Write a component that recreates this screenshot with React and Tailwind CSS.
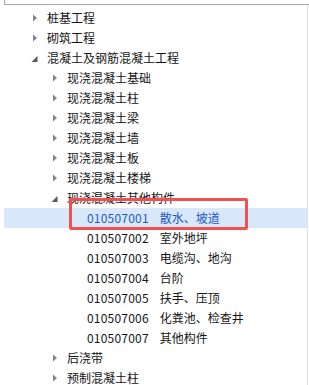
import React from 'react'

const rows = [
  { level: 0, state: 'closed', label: '桩基工程' },
  { level: 0, state: 'closed', label: '砌筑工程' },
  { level: 0, state: 'open', label: '混凝土及钢筋混凝土工程' },
  { level: 1, state: 'closed', label: '现浇混凝土基础' },
  { level: 1, state: 'closed', label: '现浇混凝土柱' },
  { level: 1, state: 'closed', label: '现浇混凝土梁' },
  { level: 1, state: 'closed', label: '现浇混凝土墙' },
  { level: 1, state: 'closed', label: '现浇混凝土板' },
  { level: 1, state: 'closed', label: '现浇混凝土楼梯' },
  { level: 1, state: 'open', label: '现浇混凝土其他构件' },
  { level: 2, code: '010507001', label: '散水、坡道', selected: true },
  { level: 2, code: '010507002', label: '室外地坪' },
  { level: 2, code: '010507003', label: '电缆沟、地沟' },
  { level: 2, code: '010507004', label: '台阶' },
  { level: 2, code: '010507005', label: '扶手、压顶' },
  { level: 2, code: '010507006', label: '化粪池、检查井' },
  { level: 2, code: '010507007', label: '其他构件' },
  { level: 1, state: 'closed', label: '后浇带' },
  { level: 1, state: 'closed', label: '预制混凝土柱' },
]

const indent = ['pl-[25px]', 'pl-[45px]', 'pl-[65px]']

const Arrow = ({ state }) => {
  if (state === 'closed') {
    return (
      <svg width="18" height="20" viewBox="0 0 18 20" className="shrink-0">
        <path d="M4 6.5 L8 10 L4 13.5 Z" fill="#858585" />
      </svg>
    )
  }
  if (state === 'open') {
    return (
      <svg width="18" height="20" viewBox="0 0 18 20" className="shrink-0">
        <path d="M8.5 8 L8.5 14 L2.5 14 Z" fill="#5a5a5a" />
      </svg>
    )
  }
  return <span className="w-[18px] shrink-0" />
}

export default function App() {
  return (
    <div
      className="w-[309px] h-[385px] bg-white overflow-hidden text-[12px] text-[#141414]"
      style={{ fontFamily: '"Noto Sans CJK SC", "Noto Sans", sans-serif' }}
    >
      <div className="ml-[4px] h-[5px] border-l border-b border-[#a8a8a8]" />
      <div className="relative h-[380px] pt-[3px] border-r border-[#e3e3e3] mr-[1px]">
        {rows.map((r, i) => (
          <div
            key={i}
            className={`relative flex items-center h-[20px] ml-[4px] ${indent[r.level]} ${
              r.selected ? 'bg-[#d9e7fb] text-[#2259c9]' : ''
            }`}
          >
            <Arrow state={r.state} />
            {r.code ? (
              <span className="flex gap-[11px] leading-[20px] whitespace-nowrap">
                <span className="tracking-[0.2px]">{r.code}</span>
                <span>{r.label}</span>
              </span>
            ) : (
              <span className="leading-[20px] whitespace-nowrap">{r.label}</span>
            )}
            {r.selected && (
              <div className="absolute left-[65px] top-[-10px] w-[179px] h-[32px] border-[3px] border-[#f2504f] rounded-[2px]" />
            )}
          </div>
        ))}
      </div>
    </div>
  )
}
